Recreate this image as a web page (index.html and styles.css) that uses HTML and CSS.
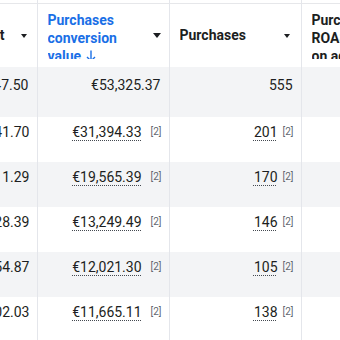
FILE: index.html
```html
<!DOCTYPE html>
<html>
<head>
<meta charset="utf-8">
<link rel="stylesheet" href="styles.css">
</head>
<body>
<div class="viewport">
  <table class="grid">
    <colgroup>
      <col class="c1"><col class="c2"><col class="c3"><col class="c4">
    </colgroup>
    <thead>
      <tr>
        <th><div class="head end"><div class="label single">Amount spent</div><span class="caret"></span></div></th>
        <th><div class="head"><div class="label sorted">Purchases conversion value <svg class="arrow" width="10" height="12" viewBox="0 0 10 12"><path d="M5 0.5V11M1 7l4 4 4-4" fill="none" stroke="currentColor" stroke-width="1.4"/></svg></div><span class="caret big"></span></div></th>
        <th><div class="head"><div class="label">Purchases</div><span class="caret"></span></div></th>
        <th><div class="head"><div class="label">Purchases ROAS (return on ad spend)</div><span class="caret"></span></div></th>
      </tr>
    </thead>
    <tbody>
      <tr class="summary">
        <td>€9,047.50</td>
        <td>€53,325.37</td>
        <td>555</td>
        <td></td>
      </tr>
      <tr>
        <td>€3,141.70</td>
        <td><span class="val">€31,394.33</span><sup class="ref">[2]</sup></td>
        <td><span class="val">201</span><sup class="ref near">[2]</sup></td>
        <td></td>
      </tr>
      <tr class="alt">
        <td>€2,011.29</td>
        <td><span class="val">€19,565.39</span><sup class="ref">[2]</sup></td>
        <td><span class="val">170</span><sup class="ref near">[2]</sup></td>
        <td></td>
      </tr>
      <tr>
        <td>€1,428.39</td>
        <td><span class="val">€13,249.49</span><sup class="ref">[2]</sup></td>
        <td><span class="val">146</span><sup class="ref near">[2]</sup></td>
        <td></td>
      </tr>
      <tr class="alt">
        <td>€1,354.87</td>
        <td><span class="val">€12,021.30</span><sup class="ref">[2]</sup></td>
        <td><span class="val">105</span><sup class="ref near">[2]</sup></td>
        <td></td>
      </tr>
      <tr>
        <td>€1,302.03</td>
        <td><span class="val">€11,665.11</span><sup class="ref">[2]</sup></td>
        <td><span class="val">138</span><sup class="ref near">[2]</sup></td>
        <td></td>
      </tr>
    </tbody>
  </table>
</div>
</body>
</html>
```

FILE: styles.css
```css
html, body {
  margin: 0;
  padding: 0;
  background: #ffffff;
}
.viewport {
  width: 340px;
  height: 340px;
  overflow: hidden;
  font-family: Roboto, "Liberation Sans", sans-serif;
  color: #1c1e21;
}
.grid {
  margin-left: -104px;
  border-collapse: collapse;
  table-layout: fixed;
  width: 537px;
}
.c1 { width: 141px; }
.c2 { width: 132px; }
.c3 { width: 132px; }
.c4 { width: 132px; }

th, td {
  border-right: 1px solid #e4e6eb;
  padding: 0;
}
th {
  height: 67px;
  text-align: left;
  vertical-align: middle;
  background: linear-gradient(#ffffff 3px, #e6e7ea 3px, #e6e7ea 4px, #ffffff 4px);
}
thead tr {
  box-shadow: 0 1px 3px rgba(0, 0, 0, 0.14);
}
.head {
  display: flex;
  align-items: center;
  height: 63px;
  margin-top: 4px;
  padding: 0 8px 0 10px;
  gap: 6px;
}
.head.end {
  justify-content: flex-end;
}
.label {
  flex: 1;
  font-size: 14px;
  font-weight: 700;
  line-height: 18px;
  max-height: 48px;
  overflow: hidden;
  margin-top: -1px;
}
.label.single {
  flex: none;
  white-space: nowrap;
  overflow: visible;
  margin-right: 10px;
}
.head.end .caret {
  margin-right: 2px;
}
.label.sorted {
  color: #1a6fe6;
}
.arrow {
  vertical-align: -1px;
  margin-left: 1px;
}
.caret {
  width: 0;
  height: 0;
  border-left: 3px solid transparent;
  border-right: 3px solid transparent;
  border-top: 4px solid #1c1e21;
  margin-right: 3px;
  flex: none;
}
.caret.big {
  border-left-width: 4px;
  border-right-width: 4px;
  border-top-width: 5px;
  margin-right: 0;
}

td {
  height: 45px;
  box-sizing: border-box;
  vertical-align: top;
  text-align: right;
  font-size: 14px;
  line-height: 16px;
  padding: 7px 7px 0 8px;
  white-space: nowrap;
}
tr.summary td {
  height: 50px;
  padding-top: 10px;
  padding-right: 8px;
  background: #f3f4f6;
}
tr.alt td {
  background: #f3f4f6;
}
.val {
  text-decoration: underline dotted #444950;
  text-underline-offset: 3px;
  text-decoration-thickness: 1px;
}
.ref {
  font-size: 10px;
  color: #606770;
  margin-left: 9px;
  vertical-align: 2px;
  line-height: 10px;
}
.ref.near {
  margin-left: 5px;
}
```
